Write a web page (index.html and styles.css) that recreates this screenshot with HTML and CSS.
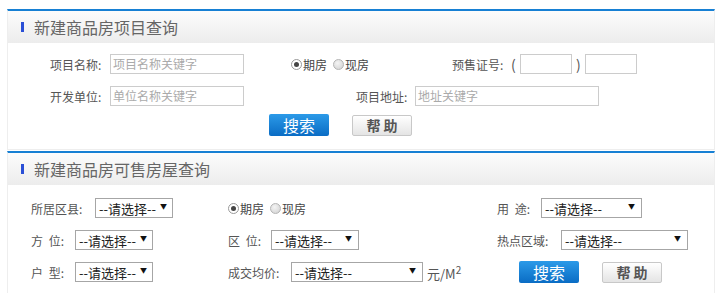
FILE: index.html
```html
<!doctype html>
<html>
    <head>
        <title>新建商品房查询</title>
        <link rel="stylesheet" href="styles.css">
    </head>
<body>
    <div class="panel" id="project">
        <div class="panel-title"><i class="mark"></i>新建商品房项目查询</div>
        <div class="panel-body">
            <div class="row">
                <span class="lbl w60">项目名称:</span>
                <span class="input w134 ph">项目名称关键字</span>
                <span class="radios r1">
                    <i class="radio on"></i><span>期房</span>
                    <i class="radio"></i><span>现房</span>
                </span>
                <span class="lbl w58">预售证号:</span>
                <span class="paren w10">(</span>
                <span class="input w52"></span>
                <span class="paren w13">)</span>
                <span class="input w52"></span>
            </div>
            <div class="row">
                <span class="lbl w60">开发单位:</span>
                <span class="input w134 ph">单位名称关键字</span>
                <span class="lbl w59 ml112">项目地址:</span>
                <span class="input w184 ph">地址关键字</span>
            </div>
            <div class="btns b1">
                <span class="btn btn-blue">搜索</span>
                <span class="btn btn-gray">帮 助</span>
            </div>
        </div>
    </div>

    <div class="panel" id="house">
        <div class="panel-title"><i class="mark"></i>新建商品房可售房屋查询</div>
        <div class="panel-body grid">
            <div class="cell">
                <span class="lbl w64">所居区县:</span>
                <span class="select w78">--请选择--<b>▼</b></span>
            </div>
            <div class="cell">
                <span class="radios">
                    <i class="radio on"></i><span>期房</span>
                    <i class="radio"></i><span>现房</span>
                </span>
            </div>
            <div class="cell">
                <span class="lbl w44 sp">用 途:</span>
                <span class="select w101">--请选择--<b>▼</b></span>
            </div>

            <div class="cell">
                <span class="lbl w44 sp">方 位:</span>
                <span class="select w78">--请选择--<b>▼</b></span>
            </div>
            <div class="cell">
                <span class="lbl w43 sp">区 位:</span>
                <span class="select w88">--请选择--<b>▼</b></span>
            </div>
            <div class="cell">
                <span class="lbl w64">热点区域:</span>
                <span class="select w127">--请选择--<b>▼</b></span>
            </div>

            <div class="cell">
                <span class="lbl w44 sp">户 型:</span>
                <span class="select w78">--请选择--<b>▼</b></span>
            </div>
            <div class="cell">
                <span class="lbl w63">成交均价:</span>
                <span class="select w132">--请选择--<b>▼</b></span>
                <span class="unit">元/M<sup>2</sup></span>
            </div>
            <div class="cell">
                <div class="btns b2">
                    <span class="btn btn-blue">搜索</span>
                    <span class="btn btn-gray">帮 助</span>
                </div>
            </div>
        </div>
    </div>
</body>
</html>
```

FILE: styles.css
```css
* { margin: 0; padding: 0; box-sizing: border-box; }
body { font: 12px "Microsoft YaHei", "Noto Sans CJK SC", sans-serif; color: #555; background: #fff; padding-top: 9px; }

.panel {
    width: 708px;
    margin-left: 7px;
    border: 1px solid #eeeeee;
    border-top: 2px solid #1780d4;
    background: #fff;
}

#house { margin-top: 1px; }

.panel-title {
    height: 32px;
    line-height: 32px;
    font-size: 16px;
    color: #666;
    padding-left: 13px;
    background: linear-gradient(to bottom, #fcfcfc, #ececec);
    display: flex;
    align-items: center;
}

.mark {
    display: inline-block;
    width: 3px;
    height: 10px;
    background: #2a4fd6;
    margin-right: 10px;
}

#project .panel-body { padding: 5px 0 13px 42px; }

.row {
    height: 32px;
    display: flex;
    align-items: center;
}

.lbl { display: inline-block; white-space: nowrap; color: #555; }
.lbl.sp { word-spacing: 3px; }
.w43 { width: 43px; } .w44 { width: 44px; } .w58 { width: 58px; } .w59 { width: 59px; }
.w60 { width: 60px; } .w63 { width: 63px; } .w64 { width: 64px; }
.w10 { width: 10px; } .w13 { width: 13px; }
.w52 { width: 52px; } .w78 { width: 78px; } .w88 { width: 88px; } .w101 { width: 101px; }
.w127 { width: 127px; } .w132 { width: 132px; } .w134 { width: 134px; } .w184 { width: 184px; }
.ml112 { margin-left: 112px; }

.paren { display: inline-block; font-size: 14px; color: #555; }
.paren.w10 { padding-left: 1px; }
.paren.w13 { padding-left: 4px; }

.input {
    display: inline-block;
    height: 20px;
    line-height: 18px;
    border: 1px solid #cccccc;
    padding-left: 2px;
    font-size: 12px;
    color: #aaa;
    white-space: nowrap;
}

.radios { display: inline-flex; align-items: center; color: #444; }
.radios.r1 { margin-left: 47px; width: 161px; }
.radios span { margin-right: 6px; margin-left: 1px; }

.radio {
    display: inline-block;
    width: 11px;
    height: 11px;
    border-radius: 50%;
    border: 1px solid #b4b4b4;
    background: radial-gradient(circle at 40% 35%, #f4f4f4, #cfcfcf);
    position: relative;
}

.radio.on { background: #fff; border-color: #9a9a9a; }

.radio.on::after {
    content: "";
    position: absolute;
    left: 2px;
    top: 2px;
    width: 5px;
    height: 5px;
    border-radius: 50%;
    background: #444;
}

.btns { display: flex; align-items: center; }
.btns.b1 { margin-left: 219px; margin-top: 2px; }
.btns.b2 { margin-left: 22px; }

.btn {
    display: inline-block;
    width: 60px;
    height: 22px;
    line-height: 22px;
    text-align: center;
    border-radius: 2px;
}

.btn-blue {
    color: #fff;
    font-size: 16px;
    background: linear-gradient(to bottom, #2b9ae8, #0a6cc4);
    margin-right: 23px;
}

.btn-gray {
    height: 21px;
    line-height: 19px;
    color: #555;
    font-size: 14px;
    font-weight: bold;
    border: 1px solid #c8c8c8;
    background: linear-gradient(to bottom, #ffffff, #e4e4e4);
}

.grid {
    display: grid;
    grid-template-columns: 197px 269px 1fr;
    grid-auto-rows: 32px;
    padding: 7px 0 5px 23px;
}

.cell { display: flex; align-items: center; }

.select {
    display: inline-flex;
    align-items: center;
    height: 20px;
    border: 1px solid #a6a6a6;
    padding-left: 3px;
    padding-right: 6px;
    font-size: 13px;
    color: #222;
    white-space: nowrap;
}

.select b {
    margin-left: auto;
    padding-left: 4px;
    font-size: 7px;
    font-weight: normal;
    color: #111;
    position: relative;
    top: -2px;
}

.unit { margin-left: 4px; font-size: 13px; color: #555; }
.unit sup { font-size: 10px; vertical-align: 5px; }
```
